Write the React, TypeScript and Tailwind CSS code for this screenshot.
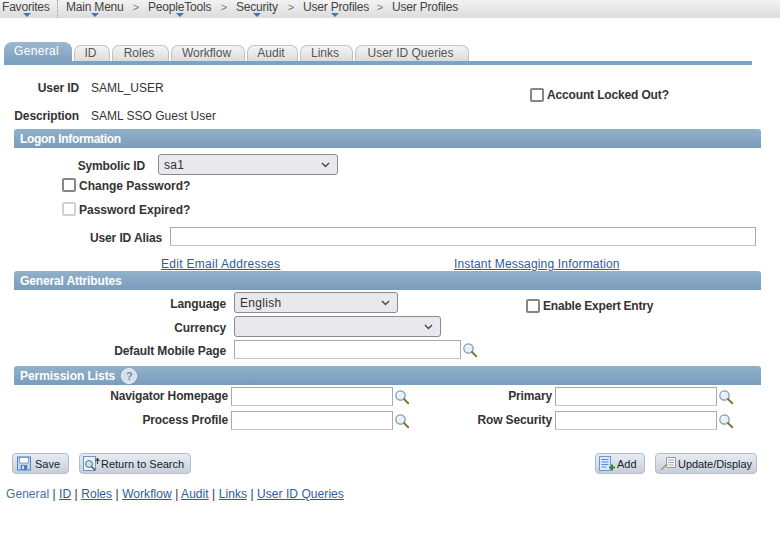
import React from 'react'

const crumbs = [
  { label: 'Main Menu', w: 'w-[82px]', drop: 'left-[25px]' },
  { label: 'PeopleTools', w: 'w-[88px]', drop: 'left-[28px]' },
  { label: 'Security', w: 'w-[67px]', drop: 'left-[17px]' },
  { label: 'User Profiles', w: 'w-[89px]', drop: 'left-[28px]' },
  { label: 'User Profiles', w: '', drop: '' },
]

const tabs = [
  { label: 'ID', w: 'w-[36px]' },
  { label: 'Roles', w: 'w-[57px]' },
  { label: 'Workflow', w: 'w-[74px]' },
  { label: 'Audit', w: 'w-[51px]' },
  { label: 'Links', w: 'w-[53px]' },
  { label: 'User ID Queries', w: 'w-[114px]' },
]

const bottomLinks = ['ID', 'Roles', 'Workflow', 'Audit', 'Links', 'User ID Queries']

const SearchIcon = () => (
  <svg width="16" height="16" viewBox="0 0 16 16" className="shrink-0">
    <circle cx="6.5" cy="6.5" r="4.7" fill="#e6f0f8" stroke="#7f98ad" strokeWidth="1.2" />
    <path d="M4 5.5a3 3 0 0 1 3-2" fill="none" stroke="#fff" strokeWidth="1.2" />
    <path d="M10 10l4.2 4.2" stroke="#7f7a35" strokeWidth="2" strokeLinecap="round" />
  </svg>
)

const Checkbox = ({ light }: { light?: boolean }) => (
  <span className={'block w-[14px] h-[14px] rounded-[2px] border-2 bg-white shrink-0 ' + (light ? 'border-[#d0d0d4]' : 'border-[#85858f]')} />
)

const Label = ({ children, className }: { children: React.ReactNode; className: string }) => (
  <span className={'text-right font-bold text-[#333] tracking-[-0.12px] shrink-0 ' + className}>{children}</span>
)

const Select = ({ value, className }: { value?: string; className: string }) => (
  <div className={'flex items-center justify-between h-[21px] pl-[5px] pr-[7px] rounded-[3px] border border-[#8a8a92] bg-[#e9e8ed] text-[#333] tracking-[0.3px] shrink-0 ' + className}>
    <span className="pt-[1px]">{value}</span>
    <svg width="9" height="6" viewBox="0 0 9 6">
      <path d="M1 1l3.5 3.5L8 1" fill="none" stroke="#444" strokeWidth="1.4" />
    </svg>
  </div>
)

const TextBox = ({ className }: { className: string }) => (
  <div className={'h-[19px] border border-[#a9a9a9] border-b-[#c4c4c4] bg-white shrink-0 ' + className} />
)

const Section = ({ children, className }: { children: React.ReactNode; className: string }) => (
  <div className={'flex items-center h-[19px] ml-[14px] w-[747px] pl-[6px] rounded-t-[3px] bg-gradient-to-b from-[#92b1c9] to-[#7a9dbd] text-white font-bold ' + className}>
    {children}
  </div>
)

const Button = ({ children, className }: { children: React.ReactNode; className: string }) => (
  <div className={'flex items-center h-[21px] rounded-[4px] border border-[#b5bcc4] bg-gradient-to-b from-[#e6edf4] to-[#c6d0da] text-[11px] text-[#222] shrink-0 ' + className}>
    {children}
  </div>
)

export default function App() {
  return (
    <div className="w-[780px] h-[535px] overflow-hidden bg-white text-[12px] leading-[14px] text-[#333]" style={{ fontFamily: '"Liberation Sans", Arial, sans-serif' }}>
      {/* breadcrumb bar */}
      <div className="flex items-start h-[18px] pl-[2px] bg-gradient-to-b from-[#f3f3f3] to-[#dcdcdc] text-[#444] tracking-[-0.2px]">
        <div className="relative w-[55px] h-[14px]">
          Favorites
          <span className="absolute left-[21px] top-[13px] w-0 h-0 border-x-[4px] border-x-transparent border-t-[4px] border-t-[#3f78b5]" />
        </div>
        <div className="w-[9px] h-[18px] border-l border-dotted border-[#999]" />
        {crumbs.map((c, i) => (
          <div key={i} className={'relative h-[14px] whitespace-nowrap ' + c.w}>
            {c.label}
            {c.drop && <span className={'absolute top-[13px] w-0 h-0 border-x-[4px] border-x-transparent border-t-[4px] border-t-[#3f78b5] ' + c.drop} />}
            {i < crumbs.length - 1 && <span className="absolute right-[9px] top-0 text-[#777] text-[11px]">&gt;</span>}
          </div>
        ))}
      </div>

      {/* tabs */}
      <div className="flex items-end gap-[2px] mt-[24px] ml-[4px] h-[19px]">
        <div className="flex items-center justify-center w-[68px] h-[19px] pb-[2px] pr-[3px] rounded-t-[8px] bg-gradient-to-b from-[#9db8cf] to-[#7fa2c0] text-white tracking-[0.3px]">General</div>
        {tabs.map((t) => (
          <div key={t.label} className={'flex items-center justify-center h-[16px] pb-[1px] pr-[3px] rounded-t-[7px] border border-b-0 border-[#c2c2c2] bg-gradient-to-b from-[#f4f4f4] to-[#dcdcdc] text-[#555] ' + t.w}>
            {t.label}
          </div>
        ))}
      </div>
      <div className="ml-[4px] w-[748px] h-[4px] bg-[#7fa2c0]" />

      {/* user header */}
      <div className="flex items-start mt-[16px] h-[28px]">
        <Label className="w-[79px]">User ID</Label>
        <span className="ml-[12px]">SAML_USER</span>
      </div>
      <div className="flex items-start h-[20px] relative">
        <Label className="w-[79px]">Description</Label>
        <span className="ml-[12px]">SAML SSO Guest User</span>
        <div className="absolute left-[530px] top-[-21px] flex items-center gap-[3px]">
          <Checkbox />
          <span className="font-bold tracking-[-0.15px]">Account Locked Out?</span>
        </div>
      </div>

      <Section className="tracking-[-0.3px]">Logon Information</Section>

      <div className="flex items-center mt-[6px] h-[21px]">
        <Label className="w-[145px] pt-[2px]">Symbolic ID</Label>
        <Select value="sa1" className="ml-[13px] w-[180px]" />
      </div>
      <div className="flex items-center gap-[3px] ml-[62px] mt-[3px] h-[14px] font-bold">
        <Checkbox />
        <span className="pt-[2px]">Change Password?</span>
      </div>
      <div className="flex items-center gap-[3px] ml-[62px] mt-[10px] h-[14px] font-bold">
        <Checkbox light />
        <span className="pt-[2px]">Password Expired?</span>
      </div>
      <div className="flex items-center mt-[11px] h-[19px]">
        <Label className="w-[162px] pt-[2px]">User ID Alias</Label>
        <TextBox className="ml-[8px] w-[586px]" />
      </div>
      <div className="flex items-center mt-[11px] h-[14px] text-[#2f5b9b] underline">
        <span className="ml-[161px] w-[293px] tracking-[0.3px]">Edit Email Addresses</span>
        <span className="tracking-[0.17px]">Instant Messaging Information</span>
      </div>

      <Section className="tracking-[-0.15px]">General Attributes</Section>

      <div className="flex items-center mt-[2px] h-[21px] relative">
        <Label className="w-[226px] pt-[2px]">Language</Label>
        <Select value="English" className="ml-[8px] w-[164px]" />
        <div className="absolute left-[526px] top-[7px] flex items-center gap-[3px] font-bold tracking-[-0.2px]">
          <Checkbox />
          <span>Enable Expert Entry</span>
        </div>
      </div>
      <div className="flex items-center mt-[3px] h-[21px]">
        <Label className="w-[226px] pt-[2px]">Currency</Label>
        <Select className="ml-[8px] w-[207px]" />
      </div>
      <div className="flex items-center mt-[3px] h-[19px]">
        <Label className="w-[226px] pt-[2px]">Default Mobile Page</Label>
        <TextBox className="ml-[8px] w-[227px]" />
        <span className="ml-[1px]"><SearchIcon /></span>
      </div>

      <Section className="mt-[7px] tracking-[-0.05px]">
        Permission Lists
        <span className="ml-[6px] flex items-center justify-center w-[16px] h-[16px] rounded-full bg-[#d5e0ea] border border-[#eef3f7] text-[#6f8fae] text-[11px]">?</span>
      </Section>

      <div className="grid grid-cols-[228px_162px_162px_162px] mt-[2px] h-[19px] items-center">
        <Label className="w-[228px] pb-[2px]">Navigator Homepage</Label>
        <div className="flex items-center ml-[3px] w-[180px]">
          <TextBox className="w-[162px]" />
          <span className="ml-[1px]"><SearchIcon /></span>
        </div>
        <Label className="col-start-3 w-[162px] pb-[2px]">Primary</Label>
        <div className="flex items-center ml-[3px] w-[180px]">
          <TextBox className="w-[162px]" />
          <span className="ml-[1px]"><SearchIcon /></span>
        </div>
      </div>
      <div className="grid grid-cols-[228px_162px_162px_162px] mt-[5px] h-[19px] items-center">
        <Label className="w-[228px] pb-[2px]">Process Profile</Label>
        <div className="flex items-center ml-[3px] w-[180px]">
          <TextBox className="w-[162px]" />
          <span className="ml-[1px]"><SearchIcon /></span>
        </div>
        <Label className="col-start-3 w-[162px] pb-[2px]">Row Security</Label>
        <div className="flex items-center ml-[3px] w-[180px]">
          <TextBox className="w-[162px]" />
          <span className="ml-[1px]"><SearchIcon /></span>
        </div>
      </div>

      {/* buttons */}
      <div className="flex items-center mt-[23px] h-[21px] pl-[12px]">
        <Button className="w-[57px] pl-[4px] gap-[4px]">
          <svg width="14" height="15" viewBox="0 0 15 15">
            <rect x="0.5" y="0.5" width="14" height="14" fill="#c3d8ee" stroke="#4d7fb8" />
            <rect x="3" y="1" width="9" height="6" fill="#fff" stroke="#4d7fb8" strokeWidth="0.7" />
            <rect x="4" y="9" width="7" height="5.5" fill="#4d7fb8" />
            <rect x="5.5" y="10" width="2" height="3.5" fill="#dce9f5" />
          </svg>
          Save
        </Button>
        <Button className="ml-[10px] w-[112px] pl-[3px]">
          <svg width="18" height="15" viewBox="0 0 18 15">
            <rect x="0.5" y="0.5" width="12" height="14" fill="#e8f0f8" stroke="#6f94bd" />
            <circle cx="6" cy="8" r="3.4" fill="#cfe2f3" stroke="#4d6f93" />
            <path d="M8.5 10.5L12 14" stroke="#4d5a33" strokeWidth="1.6" />
            <path d="M14.5 8V3M12.5 5l2-2.5 2 2.5" fill="none" stroke="#444" strokeWidth="1.2" />
          </svg>
          Return to Search
        </Button>
        <Button className="ml-[404px] w-[50px] pl-[3px]">
          <svg width="17" height="16" viewBox="0 0 17 16" className="mr-[1px]">
            <rect x="0.5" y="0.5" width="11" height="14" fill="#dbe8f6" stroke="#6f94d0" />
            <path d="M2.5 3.5h7M2.5 6h7M2.5 8.5h7M2.5 11h5" stroke="#5f86c8" />
            <path d="M13 8.5v6M10 11.5h6" stroke="#2f8f2f" strokeWidth="2" />
          </svg>
          Add
        </Button>
        <Button className="ml-[10px] w-[102px] pl-[4px] gap-[1px] tracking-[-0.05px]">
          <svg width="17" height="15" viewBox="0 0 17 15">
            <path d="M6.5 1.5h9v10h-9z" fill="#f6f6f2" stroke="#9a9a94" />
            <path d="M8 4h6M8 6.5h6M8 9h6" stroke="#b0b0aa" />
            <path d="M1 14l6-6" stroke="#9a9a94" strokeWidth="1.6" />
          </svg>
          Update/Display
        </Button>
      </div>

      {/* bottom links */}
      <div className="mt-[13px] ml-[6px] text-[#4a6f9c] tracking-[0.06px]">
        General
        {bottomLinks.map((l) => (
          <span key={l}>
            <span className="text-[#333]"> | </span>
            <span className="underline text-[#2f5b9b]">{l}</span>
          </span>
        ))}
      </div>
    </div>
  )
}
